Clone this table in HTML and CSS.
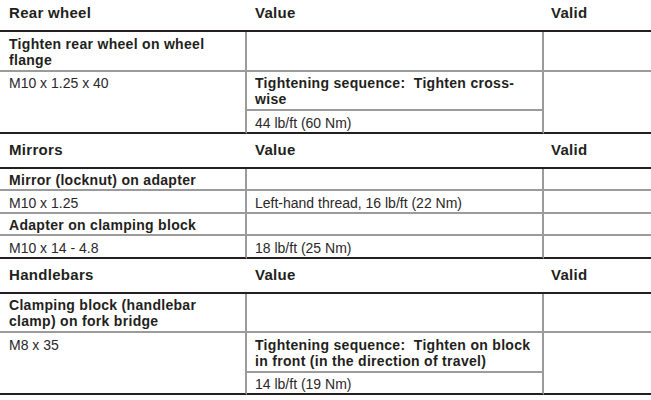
FILE: index.html
```html
<!DOCTYPE html>
<html lang="en">
<head>
<meta charset="utf-8">
<title>Torque values</title>
<link rel="stylesheet" href="styles.css">
</head>
<body>
<div class="sheet">
  <section class="sec">
    <div class="h c1">Rear wheel</div>
    <div class="h c2">Value</div>
    <div class="h c3">Valid</div>

    <div class="c c1 b tall">Tighten rear wheel on wheel flange</div>
    <div class="c c2"></div>
    <div class="c c3"></div>

    <div class="c c1 span last">M10 x 1.25 x 40</div>
    <div class="c c2 b tall">Tightening sequence:&nbsp; Tighten cross-wise</div>
    <div class="c c3 span last"></div>
    <div class="c c2 last">44 lb/ft (60 Nm)</div>
  </section>

  <section class="sec">
    <div class="h c1">Mirrors</div>
    <div class="h c2">Value</div>
    <div class="h c3">Valid</div>

    <div class="c c1 b">Mirror (locknut) on adapter</div>
    <div class="c c2"></div>
    <div class="c c3"></div>

    <div class="c c1">M10 x 1.25</div>
    <div class="c c2">Left-hand thread, 16 lb/ft (22 Nm)</div>
    <div class="c c3"></div>

    <div class="c c1 b">Adapter on clamping block</div>
    <div class="c c2"></div>
    <div class="c c3"></div>

    <div class="c c1 last">M10 x 14 - 4.8</div>
    <div class="c c2 last">18 lb/ft (25 Nm)</div>
    <div class="c c3 last"></div>
  </section>

  <section class="sec">
    <div class="h c1">Handlebars</div>
    <div class="h c2">Value</div>
    <div class="h c3">Valid</div>

    <div class="c c1 b tall">Clamping block (handlebar clamp) on fork bridge</div>
    <div class="c c2"></div>
    <div class="c c3"></div>

    <div class="c c1 span last">M8 x 35</div>
    <div class="c c2 b tall">Tightening sequence:&nbsp; Tighten on block in front (in the direction of travel)</div>
    <div class="c c3 span last"></div>
    <div class="c c2 last">14 lb/ft (19 Nm)</div>
  </section>
</div>
</body>
</html>
```

FILE: styles.css
```css
* {
  box-sizing: border-box;
}

html, body {
  margin: 0;
  padding: 0;
  background: #ffffff;
}

body {
  font-family: "Liberation Sans", Arial, sans-serif;
  color: #231f20;
}

.sheet {
  width: 651px;
  margin-top: -3px;
}

.sec {
  display: grid;
  grid-template-columns: 247px 297px 107px;
}

.c1 { grid-column: 1; padding-left: 9px; }
.c2 { grid-column: 2; padding-left: 8px; }
.c3 { grid-column: 3; padding-left: 7px; }

.h {
  font-weight: bold;
  font-size: 15px;
  letter-spacing: 0.3px;
  line-height: 18px;
  padding-top: 7px;
  padding-bottom: 8px;
  border-bottom: 2px solid #231f20;
}

.c {
  font-size: 14px;
  line-height: 16px;
  padding-top: 3.5px;
  padding-bottom: 1px;
  padding-right: 8px;
  color: #2b2829;
  border-bottom: 2px solid #9b9b9b;
}

.c.c1,
.c.c2 {
  border-right: 2px solid #9b9b9b;
}

.b {
  font-weight: bold;
  font-size: 14px;
  letter-spacing: 0.3px;
  color: #231f20;
}

.tall {
  padding-bottom: 2px;
}

.span {
  grid-row: span 2;
}

.c.last {
  border-bottom: 2px solid #231f20;
}
```
